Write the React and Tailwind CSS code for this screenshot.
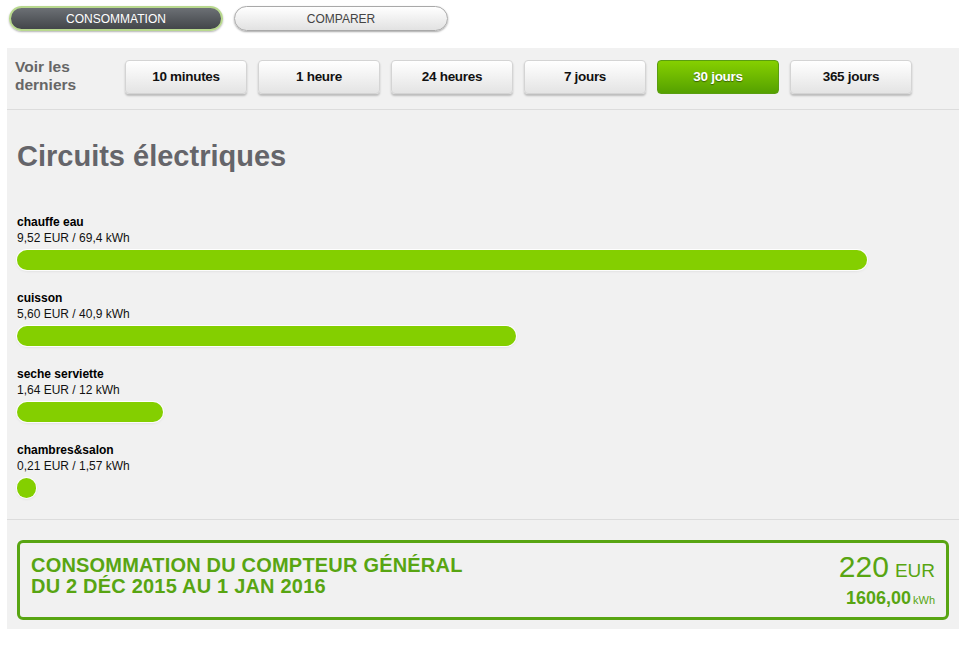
import React from "react";

const ranges = ["10 minutes", "1 heure", "24 heures", "7 jours", "30 jours", "365 jours"];

const circuits = [
  { name: "chauffe eau", value: "9,52 EUR / 69,4 kWh", width: 850 },
  { name: "cuisson", value: "5,60 EUR / 40,9 kWh", width: 499 },
  { name: "seche serviette", value: "1,64 EUR / 12 kWh", width: 146 },
  { name: "chambres&salon", value: "0,21 EUR / 1,57 kWh", width: 19 },
];

export default function App() {
  return (
    <div className="w-[976px] h-[648px] bg-white font-['Liberation_Sans',Arial,sans-serif] overflow-hidden">
      {/* Top tabs */}
      <div className="flex pt-[6px] pl-[9px] gap-[11px]">
        <div className="w-[214px] h-[25px] rounded-full border-2 border-[#b8d88e] bg-gradient-to-b from-[#6c7075] to-[#43464a] flex items-center justify-center text-white text-[12px] shadow-[0_1px_2px_rgba(0,0,0,0.3)]">
          CONSOMMATION
        </div>
        <div className="w-[214px] h-[25px] rounded-full border border-[#a9a9a9] bg-gradient-to-b from-white to-[#e2e2e2] flex items-center justify-center text-[#444] text-[12px] shadow-[0_1px_2px_rgba(0,0,0,0.35)]">
          COMPARER
        </div>
      </div>

      {/* Panel */}
      <div className="mt-[17px] ml-[7px] w-[952px] h-[581px] bg-[#f1f1f1] flex flex-col">
        {/* Range row */}
        <div className="h-[62px] border-b border-[#dcdcdc] flex items-start">
          <div className="pl-[8px] pt-[10px] w-[118px] text-[15.5px] leading-[18px] font-bold text-[#666]">
            Voir les
            <br />
            derniers
          </div>
          <div className="flex gap-[11px] pt-[12px]">
            {ranges.map((r) =>
              r === "30 jours" ? (
                <div
                  key={r}
                  className="w-[122px] h-[34px] rounded-[4px] bg-gradient-to-b from-[#86d000] to-[#55a100] border border-[#5a9e10] flex items-center justify-center text-white text-[13.5px] font-bold tracking-[-0.3px] [text-shadow:0_1px_1px_rgba(0,0,0,0.45)]"
                >
                  {r}
                </div>
              ) : (
                <div
                  key={r}
                  className="w-[122px] h-[34px] rounded-[4px] bg-gradient-to-b from-white to-[#e4e4e4] border border-[#d4d4d4] shadow-[0_2px_2px_rgba(0,0,0,0.22)] flex items-center justify-center text-[#111] text-[13.5px] font-bold tracking-[-0.3px]"
                >
                  {r}
                </div>
              )
            )}
          </div>
        </div>

        {/* Circuits */}
        <div className="px-[10px] pt-[30px] pb-[21px] border-b border-[#dcdcdc]">
          <h1 className="text-[29px] leading-[32px] font-bold text-[#65656a]">Circuits électriques</h1>
          <div className="mt-[42px] flex flex-col gap-[20px]">
            {circuits.map((c) => (
              <div key={c.name}>
                <div className="text-[12px] leading-[16px] font-bold text-black">{c.name}</div>
                <div className="text-[12px] leading-[16px] text-[#111]">{c.value}</div>
                <div
                  className="mt-[4px] h-[20px] rounded-full bg-[#84cf00] shadow-[0_0_0_1px_rgba(255,255,255,0.9),0_1px_3px_rgba(0,0,0,0.12)]"
                  style={{ width: c.width }}
                />
              </div>
            ))}
          </div>
        </div>

        {/* Summary box */}
        <div className="mt-[20px] mx-[10px] h-[80px] border-[3px] border-[#58a512] rounded-[6px] flex justify-between px-[11px] text-[#58a512]">
          <div className="pt-[12px] text-[20px] leading-[21px] font-bold tracking-[0.2px]">
            CONSOMMATION DU COMPTEUR GÉNÉRAL
            <br />
            DU 2 DÉC 2015 AU 1 JAN 2016
          </div>
          <div className="pt-[9px] flex flex-col items-end">
            <div className="leading-[30px]">
              <span className="text-[30px]">220</span>
              <span className="text-[19px] ml-[6px]">EUR</span>
            </div>
            <div className="leading-[20px] mt-[1px]">
              <span className="text-[18px] font-bold">1606,00</span>
              <span className="text-[11px] ml-[2px]">kWh</span>
            </div>
          </div>
        </div>
      </div>
    </div>
  );
}
